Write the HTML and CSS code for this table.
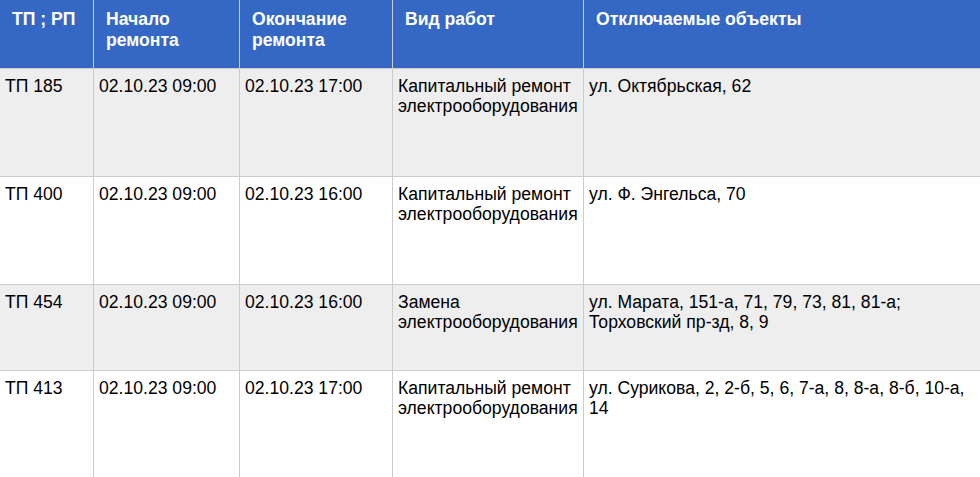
FILE: index.html
```html
<!DOCTYPE html>
<html lang="ru">
<head>
<meta charset="utf-8">
<title>Отключения</title>
<link rel="stylesheet" href="styles.css">
</head>
<body>
<div class="wrap">
<table class="grid">
  <thead>
    <tr>
      <th class="c1">ТП ; РП</th>
      <th class="c2">Начало ремонта</th>
      <th class="c3">Окончание ремонта</th>
      <th class="c4">Вид работ</th>
      <th class="c5">Отключаемые объекты</th>
    </tr>
  </thead>
  <tbody>
    <tr class="odd tall">
      <td>ТП 185</td>
      <td>02.10.23 09:00</td>
      <td>02.10.23 17:00</td>
      <td>Капитальный ремонт электрооборудования</td>
      <td>ул. Октябрьская, 62</td>
    </tr>
    <tr class="tall">
      <td>ТП 400</td>
      <td>02.10.23 09:00</td>
      <td>02.10.23 16:00</td>
      <td>Капитальный ремонт электрооборудования</td>
      <td>ул. Ф. Энгельса, 70</td>
    </tr>
    <tr class="odd short">
      <td>ТП 454</td>
      <td>02.10.23 09:00</td>
      <td>02.10.23 16:00</td>
      <td>Замена электрооборудования</td>
      <td>ул. Марата, 151-а, 71, 79, 73, 81, 81-а; Торховский пр-зд, 8, 9</td>
    </tr>
    <tr class="tall">
      <td>ТП 413</td>
      <td>02.10.23 09:00</td>
      <td>02.10.23 17:00</td>
      <td>Капитальный ремонт электрооборудования</td>
      <td>ул. Сурикова, 2, 2-б, 5, 6, 7-а, 8, 8-а, 8-б, 10-а, 14</td>
    </tr>
  </tbody>
</table>
</div>
</body>
</html>
```

FILE: styles.css
```css
html, body {
  margin: 0;
  padding: 0;
  background: #ffffff;
}
.wrap {
  width: 980px;
  height: 477px;
  overflow: hidden;
}
.grid {
  width: 980px;
  table-layout: fixed;
  border-collapse: separate;
  border-spacing: 0;
  font-family: "Liberation Sans", Arial, sans-serif;
  font-size: 17.6px;
  color: #000000;
}
.grid th, .grid td {
  box-sizing: border-box;
  border-right: 1px solid #cccccc;
  border-bottom: 1px solid #cccccc;
  vertical-align: top;
  text-align: left;
}
.grid th:last-child, .grid td:last-child {
  border-right: none;
}
.grid th {
  background: #3568c5;
  color: #ffffff;
  font-weight: bold;
  height: 69px;
  padding: 9px 12px 0 12px;
  line-height: 20.5px;
}
.grid td {
  padding: 7px 5px 0 5px;
  line-height: 20px;
}
.c1 { width: 94px; }
.c2 { width: 146px; }
.c3 { width: 153px; }
.c4 { width: 191px; }
.odd td { background: #eeeeee; }
.tall td { height: 108px; }
.short td { height: 86px; }
```
